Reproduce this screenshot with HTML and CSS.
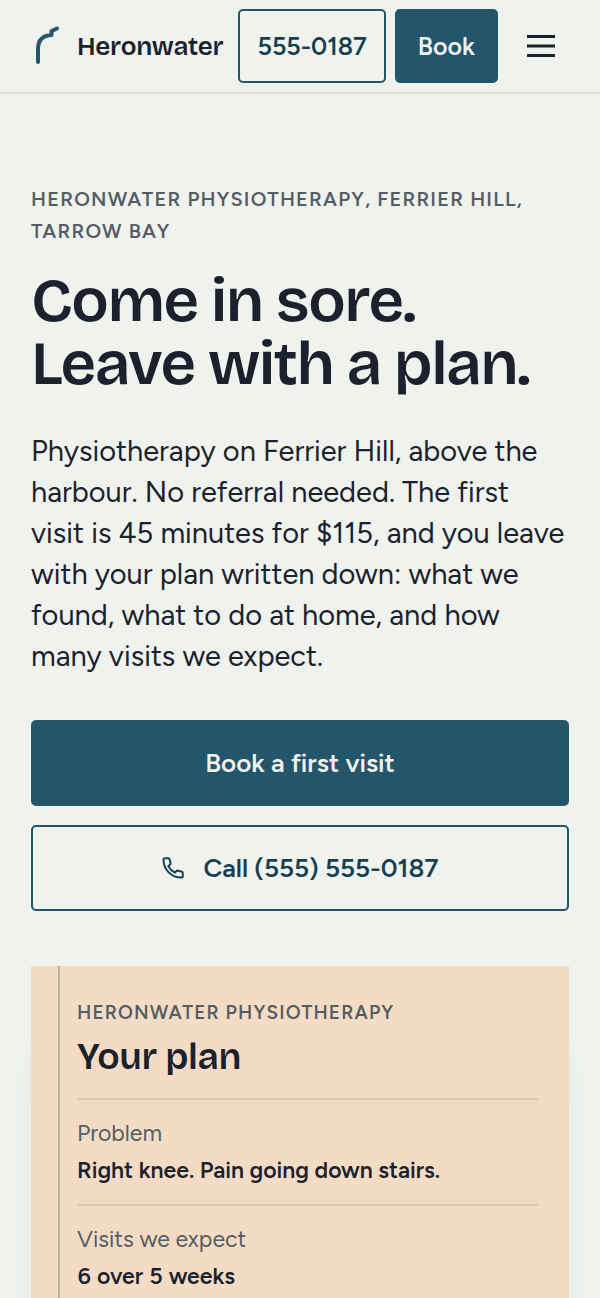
FILE: index.html
```html
<!DOCTYPE html>
<html lang="en">
<head>
  <meta charset="utf-8">
  <meta name="viewport" content="width=device-width, initial-scale=1">
  <title>Heronwater Physiotherapy</title>
  <link rel="stylesheet" href="styles.css">
</head>
<body>
  <header class="site-header">
    <a class="brand" href="#">
      <svg class="brand-mark" viewBox="0 0 30 42" aria-hidden="true">
        <path d="M8 37V24C8 15 13 10.500 21.500 10V6L27 3.500"/>
      </svg>
      <span>Heronwater</span>
    </a>
    <a class="button button-outline button-phone" href="tel:5550187">555-0187</a>
    <a class="button button-solid button-book" href="#book">Book</a>
    <button class="menu-button" type="button" aria-label="Menu">
      <svg class="menu-icon" viewBox="0 0 28 22" aria-hidden="true">
        <path d="M0 1.500H28M0 11H28M0 20.500H28"/>
      </svg>
    </button>
  </header>

  <main class="page">
    <section class="hero">
      <p class="eyebrow">Heronwater Physiotherapy, Ferrier Hill, Tarrow Bay</p>
      <h1 class="hero-title">Come in sore.<br>Leave with a plan.</h1>
      <p class="lead">Physiotherapy on Ferrier Hill, above the harbour. No referral needed. The first visit is 45 minutes for $115, and you leave with your plan written down: what we found, what to do at home, and how many visits we expect.</p>
      <div class="actions">
        <a class="button button-solid button-large" href="#book">Book a first visit</a>
        <a class="button button-outline button-large" href="tel:5555550187">
          <svg class="phone-icon" viewBox="0 0 24 24" aria-hidden="true">
            <path d="M2.500 3.800C2.500 2.800 3.200 2.200 4 2.200H7C7.900 2.200 8.500 2.700 8.700 3.500L9.500 7C9.700 7.900 9.400 8.500 8.700 9L7.300 10.100C8.800 13.100 11 15.200 14 16.700L15.100 15.300C15.600 14.700 16.200 14.500 17 14.700L20.500 15.500C21.300 15.700 21.800 16.300 21.800 17.100V20C21.800 21 21.200 21.600 20.200 21.600C10.500 21.600 2.500 13.600 2.500 3.800Z"/>
          </svg>
          <span>Call (555) 555-0187</span>
        </a>
      </div>
    </section>

    <section class="plan">
      <div class="plan-body">
        <p class="plan-eyebrow">Heronwater Physiotherapy</p>
        <h2 class="plan-title">Your plan</h2>
        <dl class="plan-list">
          <div class="plan-row">
            <dt>Problem</dt>
            <dd>Right knee. Pain going down stairs.</dd>
          </div>
          <div class="plan-row">
            <dt>Visits we expect</dt>
            <dd>6 over 5 weeks</dd>
          </div>
        </dl>
      </div>
    </section>
  </main>
</body>
</html>
```
FILE: styles.css
```css
* {
  box-sizing: border-box;
}

body {
  margin: 0;
  background: #f0f2ed;
  color: #1b222d;
  font-family: Figtree, Lato, sans-serif;
}

h1, h2, p, dl, dd {
  margin: 0;
}

a {
  color: inherit;
  text-decoration: none;
}

.site-header {
  display: flex;
  align-items: center;
  gap: 9px;
  padding: 9px 30px;
  border-bottom: 2px solid #dbdeda;
}

.brand {
  display: flex;
  align-items: center;
  gap: 17px;
  margin-right: auto;
  font-family: "Bricolage Grotesque", Inter, sans-serif;
  font-size: 26px;
  font-weight: 600;
  letter-spacing: -0.01em;
  white-space: nowrap;
}

.brand-mark {
  width: 30px;
  height: 42px;
  fill: none;
  stroke: #24566b;
  stroke-width: 4;
  stroke-linecap: round;
  stroke-linejoin: round;
}

.button {
  display: flex;
  align-items: center;
  justify-content: center;
  gap: 18px;
  min-height: 74px;
  padding: 0 17px;
  border: 2px solid #24566b;
  border-radius: 5px;
  font-size: 25px;
  font-weight: 600;
  white-space: nowrap;
}

.button-solid {
  background: #24566b;
  color: #f0f2ed;
}

.button-outline {
  color: #163f52;
}

.button-book {
  padding: 0 21px;
}

.button-large {
  min-height: 86px;
  font-size: 26px;
}

.menu-button {
  display: flex;
  align-items: center;
  justify-content: center;
  width: 58px;
  height: 74px;
  margin-left: 5px;
  padding: 0;
  border: 0;
  background: none;
  color: #1b222d;
}

.menu-icon {
  width: 28px;
  height: 22px;
  stroke: currentColor;
  stroke-width: 3;
}

.page {
  padding: 89px 31px 40px;
}

.eyebrow,
.plan-eyebrow {
  color: #545d64;
  font-weight: 600;
  text-transform: uppercase;
  letter-spacing: 0.06em;
}

.eyebrow {
  font-size: 20px;
  line-height: 32px;
}

.hero-title {
  margin-top: 22px;
  font-family: "Bricolage Grotesque", Inter, sans-serif;
  font-size: 62px;
  font-weight: 600;
  letter-spacing: -0.025em;
  line-height: 63px;
}

.lead {
  margin-top: 35px;
  font-size: 29px;
  line-height: 41px;
}

.actions {
  display: grid;
  gap: 19px;
  margin-top: 44px;
}

.phone-icon {
  width: 24px;
  height: 24px;
  fill: none;
  stroke: currentColor;
  stroke-width: 2;
  stroke-linejoin: round;
}

.plan {
  margin-top: 55px;
  padding-left: 27px;
  background: #f4dcc4;
  box-shadow: 0 60px 50px -20px #d5e5ea;
}

.plan-body {
  padding: 32px 31px 32px 17px;
  border-left: 2px solid #b9b8a4;
}

.plan-eyebrow {
  font-size: 19px;
  line-height: 30px;
}

.plan-title {
  margin-top: 7px;
  font-family: "Bricolage Grotesque", Inter, sans-serif;
  font-size: 37px;
  font-weight: 600;
  letter-spacing: -0.01em;
  line-height: 44px;
}

.plan-list {
  margin-top: 19px;
}

.plan-row {
  padding: 14px 0 15px;
  border-top: 2px solid #dec7b0;
  font-size: 23px;
}

.plan-row dt {
  color: #545d64;
  line-height: 38px;
}

.plan-row dd {
  font-weight: 600;
  font-variant-numeric: tabular-nums;
  line-height: 37px;
}
```
